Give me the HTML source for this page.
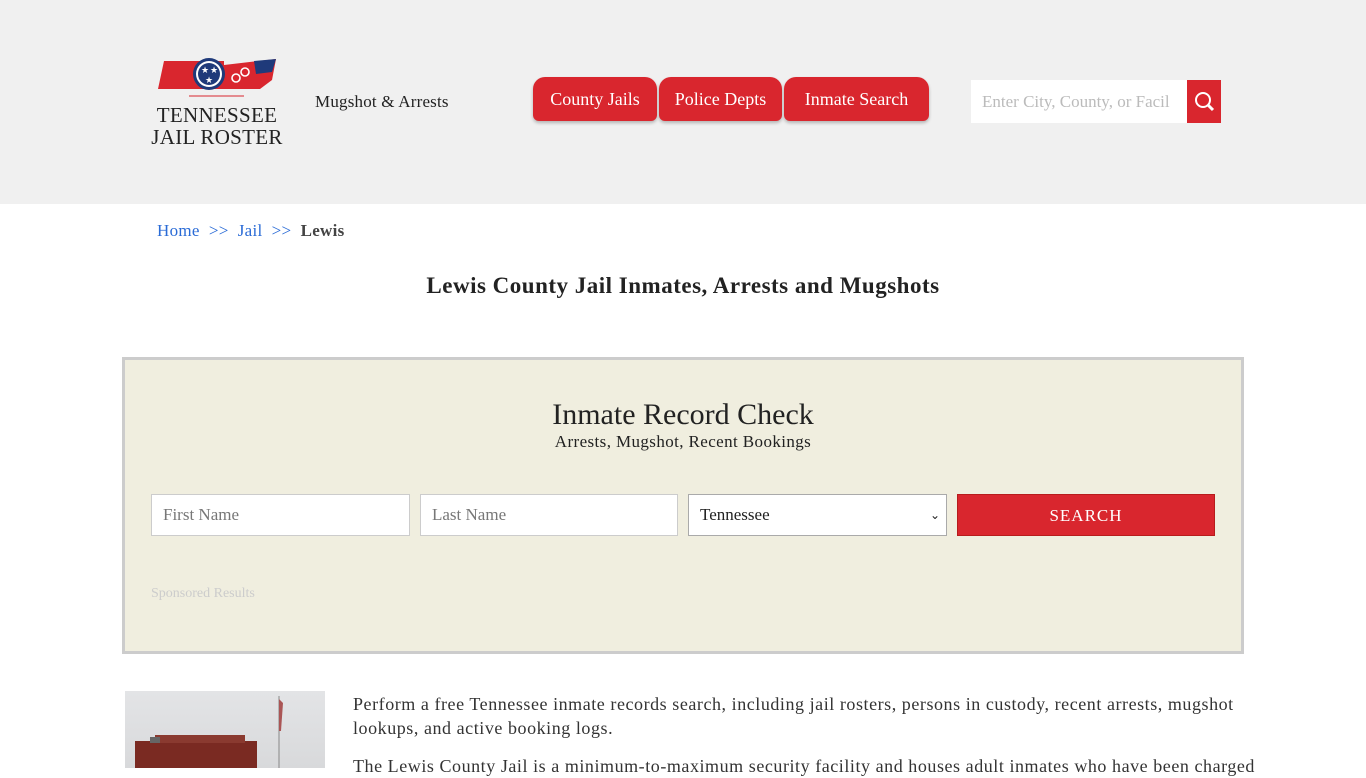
<!DOCTYPE html>
<html><head><meta charset="utf-8"><style>
*{box-sizing:border-box;margin:0;padding:0}
body{width:1366px;height:768px;overflow:hidden;background:#fff;font-family:"Liberation Serif","DejaVu Serif",serif;color:#222}
.hdr{height:204px;background:#f0f0f0;position:relative}
.logo{position:absolute;left:150px;top:58px;width:134px}
.lt{font-size:21px;line-height:22px;color:#222;text-align:center;letter-spacing:0.3px;white-space:nowrap;margin-top:1px}
.mug{position:absolute;left:315px;top:92px;font-size:17px;letter-spacing:0.2px}
.tab{position:absolute;top:77px;height:44px;background:#d9262e;color:#fff;font-size:18px;line-height:44px;text-align:center;border-radius:12px 12px 6px 6px;box-shadow:0 2px 3px rgba(0,0,0,.25)}
.sbox{position:absolute;left:971px;top:80px;width:216px;height:43px;background:#fff;color:#bbb;font-size:17px;line-height:43px;padding-left:11px;white-space:nowrap;overflow:hidden}
.sbtn{position:absolute;left:1187px;top:80px;width:34px;height:43px;background:#d9262e}
.bc{position:absolute;top:221px;left:157px;font-size:17px;letter-spacing:0.3px}
.bc a{color:#2a6bd6;text-decoration:none}
h1{position:absolute;top:273px;width:1366px;text-align:center;font-size:23px;font-weight:bold;color:#222;letter-spacing:0.5px}
.panel{position:absolute;left:122px;top:357px;width:1122px;height:297px;background:#f0eedf;border:3px solid #ccc}
.pt{position:absolute;top:38px;width:100%;text-align:center;font-size:30px}
.ps{position:absolute;top:72px;width:100%;text-align:center;font-size:17px;letter-spacing:0.4px}
.in{position:absolute;top:134px;height:42px;background:#fff;border:1px solid #ccc;font-size:17px;color:#777;padding-left:11px;line-height:40px}
.btn{position:absolute;left:832px;top:134px;width:258px;height:42px;background:#d9262e;color:#fff;border:1px solid #b71c1c;text-align:center;line-height:42px;font-size:17px;letter-spacing:1px}
.spn{position:absolute;left:26px;top:226px;font-size:14px;color:#ccc}
.img{position:absolute;left:125px;top:691px;width:200px;height:77px;background:linear-gradient(#e3e4e6,#d8d9db)}
.txt{position:absolute;left:353px;top:692px;width:890px;font-size:18px;line-height:24px;color:#333;letter-spacing:0.55px}
</style></head><body>
<div class="hdr">
 <div class="logo">
  <svg width="134" height="40" viewBox="-4 0 134 40"><path d="M10 3 L70 3 L70 7 L122 1 L118 22 L106 31 L4 31 Z" fill="#d9262e"/><path d="M100 3 L122 1 L118 14 L102 16Z" fill="#1f3a7a"/><circle cx="55" cy="16" r="16" fill="#1f3a7a"/><circle cx="55" cy="16" r="13" fill="#fff"/><circle cx="55" cy="16" r="11" fill="#1f3a7a"/><text x="47" y="15" fill="#fff" font-size="9">★</text><text x="56" y="15" fill="#fff" font-size="9">★</text><text x="51" y="25" fill="#fff" font-size="9">★</text><circle cx="82" cy="20" r="4" fill="none" stroke="#fff" stroke-width="1.6"/><circle cx="91" cy="14" r="4" fill="none" stroke="#fff" stroke-width="1.6"/><line x1="35" y1="38" x2="90" y2="38" stroke="#d9262e"/></svg>
  <div class="lt">TENNESSEE<br>JAIL ROSTER</div>
 </div>
 <div class="mug">Mugshot &amp; Arrests</div>
 <div class="tab" style="left:533px;width:124px">County Jails</div>
 <div class="tab" style="left:659px;width:123px">Police Depts</div>
 <div class="tab" style="left:784px;width:145px">Inmate Search</div>
 <div class="sbox">Enter City, County, or Facil</div>
 <div class="sbtn"><svg width="34" height="43"><circle cx="16" cy="20" r="7" fill="none" stroke="#fff" stroke-width="2"/><line x1="21" y1="25" x2="26" y2="30" stroke="#fff" stroke-width="3"/></svg></div>
</div>
<div class="bc"><a>Home</a> &nbsp;<a>&gt;&gt;</a>&nbsp; <a>Jail</a> &nbsp;<a>&gt;&gt;</a>&nbsp; <b style="color:#444">Lewis</b></div>
<h1>Lewis County Jail Inmates, Arrests and Mugshots</h1>
<div class="panel">
 <div class="pt">Inmate Record Check</div>
 <div class="ps">Arrests, Mugshot, Recent Bookings</div>
 <div class="in" style="left:26px;width:259px">First Name</div>
 <div class="in" style="left:295px;width:258px">Last Name</div>
 <div class="in" style="left:563px;width:259px;color:#222;border-color:#aaa">Tennessee<span style="position:absolute;right:6px;font-size:12px">⌄</span></div>
 <div class="btn">SEARCH</div>
 <div class="spn">Sponsored Results</div>
</div>
<div class="img"><svg width="200" height="77"><rect x="10" y="50" width="122" height="27" fill="#7a2a22"/><rect x="30" y="44" width="90" height="8" fill="#8a3a30"/><rect x="25" y="46" width="10" height="6" fill="#666"/><line x1="154" y1="5" x2="154" y2="77" stroke="#888"/><path d="M154 8 L158 12 L156 40 L154 40Z" fill="#a55"/></svg></div>
<div class="txt">Perform a free Tennessee inmate records search, including jail rosters, persons in custody, recent arrests, mugshot lookups, and active booking logs.<br><div style="margin-top:14px;white-space:nowrap">The Lewis County Jail is a minimum-to-maximum security facility and houses adult inmates who have been charged</div></div>
</body></html>
